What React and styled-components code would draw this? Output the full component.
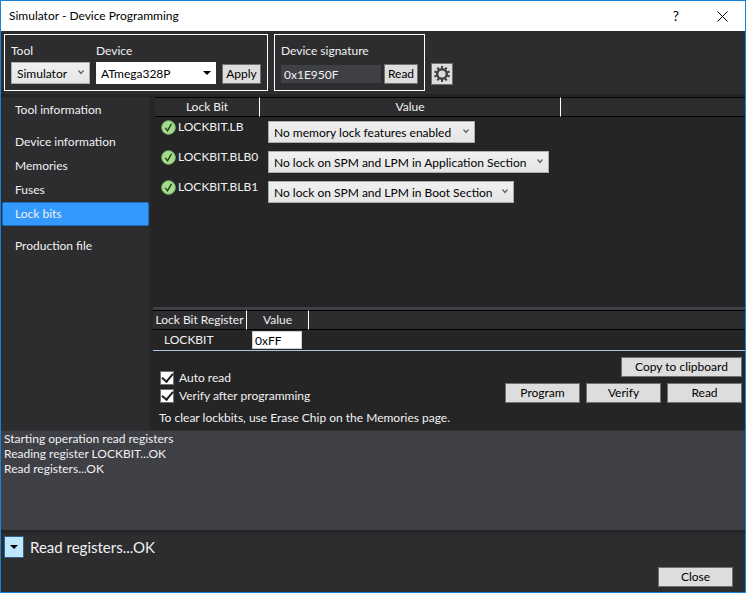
import React, {useState} from "react"
import styled, {createGlobalStyle} from "styled-components";

const GlobalStyle = createGlobalStyle`
  * {
    box-sizing: border-box;
  }

  body {
    margin: 0;
    background-color: #2d2d30;
  }

  body, button, input, select, table {
    font-family: Lato, "Open Sans", sans-serif;
    font-size: 12px;
    line-height: 16px;
  }
`

const Window = styled.div`
  display: flex;
  flex-direction: column;
  min-height: 100vh;
  border: 1px solid #1883d7;
  background-color: #2d2d30;
  color: #f1f1f1;
`

const TitleBar = styled.header`
  display: flex;
  align-items: center;
  height: 30px;
  padding-left: 8px;
  background-color: #ffffff;
  color: #000000;

  h1 {
    flex: 1;
    margin: 0;
    font-size: 12px;
    font-weight: 400;
  }
`

const CaptionButton = styled.button`
  display: flex;
  align-items: center;
  justify-content: center;
  width: 46px;
  height: 30px;
  padding: 0;
  border: 0;
  background: none;
  color: #000000;
  font-size: 14px;
`

const Toolbar = styled.div`
  display: flex;
  align-items: flex-end;
  gap: 6px;
  padding: 3px;
  border-bottom: 3px solid #252526;
`

const Group = styled.div`
  display: flex;
  align-items: flex-end;
  gap: ${props => props.$gap}px;
  height: 57px;
  padding: 0 6px 6px;
  border: 1px solid #ffffff;
`

const Field = styled.div`
  display: flex;
  flex-direction: column;
  gap: ${props => props.$gap}px;
`

const Button = styled.button`
  width: ${props => props.$width}px;
  height: 20px;
  padding: 0;
  border: 1px solid #707070;
  background-color: #dddddd;
  color: #000000;
  line-height: 16px;
  white-space: nowrap;
`

const GearButton = styled(Button)`
  display: flex;
  align-items: center;
  justify-content: center;
  height: 22px;
  margin-bottom: 6px;
`

const SelectBox = styled.span`
  position: relative;
  display: block;
  width: ${props => props.$width}px;

  select {
    display: block;
    width: 100%;
    height: 22px;
    padding: 1px 16px 0 ${props => props.$plain ? 4 : 5}px;
    border: 1px solid ${props => props.$plain ? "#ffffff" : "#acacac"};
    border-radius: 0;
    appearance: none;
    background: ${props => props.$plain ? "#ffffff" : "linear-gradient(#f0f0f0, #e5e5e5)"};
    color: #000000;
  }

  svg {
    position: absolute;
    top: 8px;
    right: 5px;
    pointer-events: none;
  }
`

const SignatureInput = styled.input`
  width: 100px;
  height: 18px;
  margin-bottom: 1px;
  padding: 0 3px;
  border: 0;
  background-color: #3f3f46;
  color: #f1f1f1;
`

const Body = styled.div`
  display: grid;
  grid-template-columns: 149px 1fr;
  flex: 1;
`

const Sidebar = styled.nav`
  display: flex;
  flex-direction: column;
  padding: 1px 1px 0;

  a {
    height: 24px;
    padding: 3px 12px;
    border: 1px solid transparent;
    border-radius: 2px;
    color: #f1f1f1;
    text-decoration: none;
  }

  a[aria-current] {
    border-color: #1a70c0;
    background-color: #3399ff;
  }

  a.spaced {
    margin-top: 8px;
  }
`

const Page = styled.main`
  display: flex;
  flex-direction: column;
  padding-left: 3px;
  background-color: #252526;
`

const Table = styled.table`
  width: 100%;
  border-collapse: separate;
  border-spacing: 0;
  table-layout: fixed;

  th {
    height: 20px;
    padding: 0;
    border-top: 1px solid #000000;
    border-bottom: 1px solid #000000;
    background-color: #2d2d30;
    font-weight: 400;
    white-space: nowrap;
  }

  th + th {
    border-left: 1px solid #ffffff;
  }

  td {
    padding: 0;
    vertical-align: top;
  }
`

const LockTable = styled(Table)`
  width: calc(100% - 2px);
  margin-left: 2px;

  td {
    height: 30px;
  }

  td:first-child {
    padding: 3px 0 0 6px;
  }

  td:nth-child(2) {
    padding: 4px 0 0 9px;
  }
`

const BitName = styled.span`
  display: flex;
  align-items: flex-start;
  gap: 2px;
  line-height: 13px;
`

const RegisterTable = styled(Table)`
  margin-top: auto;
  border-top: 3px solid #3f3f46;
  border-bottom: 1px solid #a6c4e4;

  td {
    height: 20px;
    vertical-align: middle;
  }

  td:first-child {
    padding-left: 11px;
  }

  td:nth-child(2) {
    padding-left: 6px;
  }
`

const RegisterInput = styled.input`
  display: block;
  width: 50px;
  height: 18px;
  padding: 0 2px;
  border: 1px solid #cccccc;
  background-color: #ffffff;
  color: #000000;
`

const Controls = styled.div`
  display: flex;
  justify-content: space-between;
  padding: 6px 3px 4px 6px;
`

const Options = styled.div`
  display: flex;
  flex-direction: column;
  gap: 2px;
  padding-top: 13px;

  p {
    margin: 4px 0 0;
  }
`

const Check = styled.label`
  display: flex;
  align-items: center;
  gap: 5px;

  input {
    display: grid;
    place-content: center;
    width: 14px;
    height: 14px;
    margin: 0 0 0 1px;
    border: 1px solid #707070;
    appearance: none;
    background-color: #ffffff;
  }

  input:checked::before {
    content: "";
    width: 9px;
    height: 5px;
    margin-bottom: 3px;
    border: solid #1e1e1e;
    border-width: 0 0 2px 2px;
    transform: rotate(-50deg);
  }
`

const Actions = styled.div`
  display: flex;
  flex-direction: column;
  align-items: flex-end;
  gap: 6px;

  div {
    display: flex;
    gap: 6px;
  }
`

const Log = styled.div`
  min-height: 103px;
  padding: 0 3px;
  border-top: 1px solid #333337;
  border-bottom: 3px solid #252526;
  background-color: #3f3f46;
  line-height: 15px;
`

const Status = styled.div`
  display: flex;
  align-items: center;
  gap: 6px;
  padding: 3px;
  font-size: 15px;
  line-height: 20px;
`

const ExpandButton = styled.button`
  display: flex;
  align-items: center;
  justify-content: center;
  width: 20px;
  height: 22px;
  padding: 0;
  border: 1px solid #2c628b;
  background-color: #bee6fd;
`

const Footer = styled.footer`
  display: flex;
  justify-content: flex-end;
  padding: 6px 12px 5px;
`

const Chevron = () => (
    <svg width="8" height="6" viewBox="0 0 8 6" fill="none" stroke="#606060" strokeWidth="1.2">
        <path d="M1.5 .5l2.5 3 2.5-3"/>
    </svg>
)

const Arrow = () => (
    <svg width="8" height="6" viewBox="0 0 8 6">
        <path d="M0 1h8L4 5z" fill="#000000"/>
    </svg>
)

const Gear = () => (
    <svg width="18" height="18" viewBox="-9 -9 18 18">
        <circle r="4.8" fill="none" stroke="#424242" strokeWidth="2.4"/>
        {[0, 36, 72, 108, 144, 180, 216, 252, 288, 324].map(angle => (
            <rect key={angle} x="-1" y="-8" width="2" height="3" fill="#424242" transform={`rotate(${angle})`}/>
        ))}
    </svg>
)

const Tick = () => (
    <svg width="15" height="15" viewBox="0 0 15 15">
        <circle cx="7.5" cy="7.5" r="6.8" fill="#a4dc8c" stroke="#7fb86c"/>
        <path d="M4.3 7.8l2.2 3 4-7" fill="none" stroke="#1e3a1a" strokeWidth="1.4"/>
    </svg>
)

const Select = ({id, label, width, plain, value}) => (
    <SelectBox $width={width} $plain={plain}>
        <select id={id} aria-label={label} defaultValue={value}>
            <option>{value}</option>
        </select>
        {plain ? <Arrow/> : <Chevron/>}
    </SelectBox>
)

const pages = [
    {name: "Tool information"},
    {name: "Device information", spaced: true},
    {name: "Memories"},
    {name: "Fuses"},
    {name: "Lock bits"},
    {name: "Production file", spaced: true},
]

const lockBits = [
    {name: "LOCKBIT.LB", value: "No memory lock features enabled", width: 207},
    {name: "LOCKBIT.BLB0", value: "No lock on SPM and LPM in Application Section", width: 281},
    {name: "LOCKBIT.BLB1", value: "No lock on SPM and LPM in Boot Section", width: 246},
]

const App = () => {
    const [page, setPage] = useState("Lock bits")

    return (
        <>
            <GlobalStyle/>
            <Window>
                <TitleBar>
                    <h1>Simulator - Device Programming</h1>
                    <CaptionButton aria-label="Help">?</CaptionButton>
                    <CaptionButton aria-label="Close window">
                        <svg width="11" height="11" viewBox="0 0 11 11" stroke="#000000">
                            <path d="M.5 .5l10 10M10.5 .5l-10 10"/>
                        </svg>
                    </CaptionButton>
                </TitleBar>
                <Toolbar>
                    <Group $gap={6}>
                        <Field $gap={3}>
                            <label htmlFor="tool">Tool</label>
                            <Select id="tool" width={79} value="Simulator"/>
                        </Field>
                        <Field $gap={3}>
                            <label htmlFor="device">Device</label>
                            <Select id="device" width={120} plain value="ATmega328P"/>
                        </Field>
                        <Button $width={39}>Apply</Button>
                    </Group>
                    <Group $gap={3}>
                        <Field $gap={6}>
                            <label htmlFor="signature">Device signature</label>
                            <SignatureInput id="signature" readOnly value="0x1E950F"/>
                        </Field>
                        <Button $width={34}>Read</Button>
                    </Group>
                    <GearButton $width={22} aria-label="Settings"><Gear/></GearButton>
                </Toolbar>
                <Body>
                    <Sidebar>
                        {pages.map(({name, spaced}) => (
                            <a
                                key={name}
                                href="#page"
                                className={spaced ? "spaced" : undefined}
                                aria-current={name === page ? "page" : undefined}
                                onClick={() => setPage(name)}
                            >
                                {name}
                            </a>
                        ))}
                    </Sidebar>
                    <Page>
                        <LockTable>
                            <colgroup>
                                <col width="104"/>
                                <col width="301"/>
                                <col/>
                            </colgroup>
                            <thead>
                                <tr>
                                    <th>Lock Bit</th>
                                    <th>Value</th>
                                    <th/>
                                </tr>
                            </thead>
                            <tbody>
                                {lockBits.map(bit => (
                                    <tr key={bit.name}>
                                        <td><BitName><Tick/>{bit.name}</BitName></td>
                                        <td><Select label={bit.name} width={bit.width} value={bit.value}/></td>
                                        <td/>
                                    </tr>
                                ))}
                            </tbody>
                        </LockTable>
                        <RegisterTable>
                            <colgroup>
                                <col width="93"/>
                                <col width="62"/>
                                <col/>
                            </colgroup>
                            <thead>
                                <tr>
                                    <th>Lock Bit Register</th>
                                    <th>Value</th>
                                    <th/>
                                </tr>
                            </thead>
                            <tbody>
                                <tr>
                                    <td>LOCKBIT</td>
                                    <td><RegisterInput aria-label="LOCKBIT" defaultValue="0xFF"/></td>
                                    <td/>
                                </tr>
                            </tbody>
                        </RegisterTable>
                        <Controls>
                            <Options>
                                <Check><input type="checkbox" defaultChecked/>Auto read</Check>
                                <Check><input type="checkbox" defaultChecked/>Verify after programming</Check>
                                <p>To clear lockbits, use Erase Chip on the Memories page.</p>
                            </Options>
                            <Actions>
                                <Button $width={121}>Copy to clipboard</Button>
                                <div>
                                    <Button $width={75}>Program</Button>
                                    <Button $width={75}>Verify</Button>
                                    <Button $width={75}>Read</Button>
                                </div>
                            </Actions>
                        </Controls>
                    </Page>
                </Body>
                <Log>
                    <div>Starting operation read registers</div>
                    <div>Reading register LOCKBIT...OK</div>
                    <div>Read registers...OK</div>
                </Log>
                <Status>
                    <ExpandButton aria-label="Toggle log"><Arrow/></ExpandButton>
                    Read registers...OK
                </Status>
                <Footer>
                    <Button $width={75}>Close</Button>
                </Footer>
            </Window>
        </>
    )
}

export default App
